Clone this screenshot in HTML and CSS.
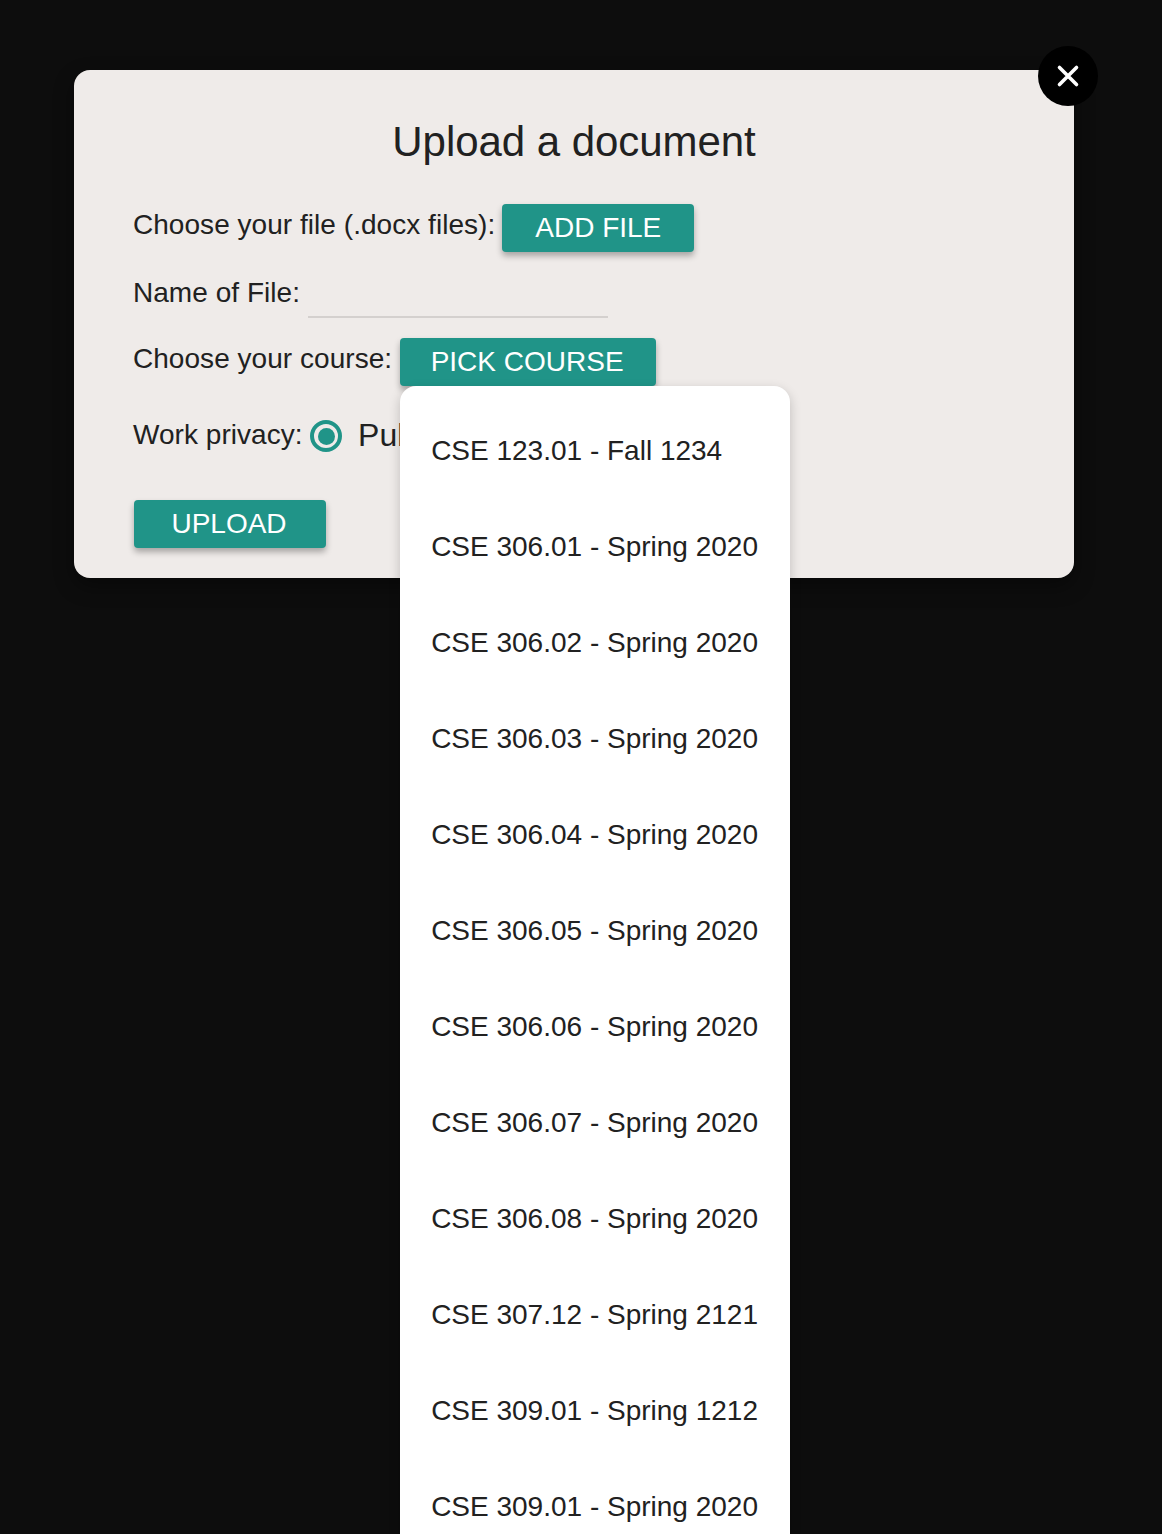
FILE: index.html
```html
<!DOCTYPE html>
<html lang="en">
<head>
<meta charset="utf-8">
<title>Upload a document</title>
<link rel="stylesheet" href="styles.css">
</head>
<body>
<div class="overlay">
  <section class="modal">
    <button class="close" aria-label="Close">
      <svg width="24" height="24" viewBox="0 0 24 24"><path d="M3.5 3.5 L20.5 20.5 M20.5 3.5 L3.5 20.5" fill="none" stroke="#fff" stroke-width="3.6" stroke-linecap="round"/></svg>
    </button>
    <h1 class="title">Upload a document</h1>
    <div class="row row-file">
      <span class="label">Choose your file (.docx files):</span>
      <button class="btn btn-file">ADD FILE</button>
    </div>
    <div class="row row-name">
      <span class="label">Name of File:</span>
      <span class="input"></span>
    </div>
    <div class="row row-course">
      <span class="label">Choose your course:</span>
      <div class="picker">
        <button class="btn btn-course">PICK COURSE</button>
        <ul class="menu">
          <li>CSE 123.01 - Fall 1234</li>
          <li>CSE 306.01 - Spring 2020</li>
          <li>CSE 306.02 - Spring 2020</li>
          <li>CSE 306.03 - Spring 2020</li>
          <li>CSE 306.04 - Spring 2020</li>
          <li>CSE 306.05 - Spring 2020</li>
          <li>CSE 306.06 - Spring 2020</li>
          <li>CSE 306.07 - Spring 2020</li>
          <li>CSE 306.08 - Spring 2020</li>
          <li>CSE 307.12 - Spring 2121</li>
          <li>CSE 309.01 - Spring 1212</li>
          <li>CSE 309.01 - Spring 2020</li>
        </ul>
      </div>
    </div>
    <div class="row row-privacy">
      <span class="label">Work privacy:</span>
      <span class="radio"></span>
      <span class="option">Public</span>
    </div>
    <button class="btn btn-upload">UPLOAD</button>
  </section>
</div>
</body>
</html>
```
FILE: styles.css
```css
* { box-sizing: border-box; }
html, body { margin: 0; height: 100%; }
body { font-family: "Liberation Sans", Arial, sans-serif; color: #212121; background: #0d0d0d; }
.overlay { height: 1534px; overflow: hidden; padding: 70px 88px 0 74px; }
.modal { position: relative; width: 1000px; height: 508px; background: #efebe9; border-radius: 16px; padding: 46px 60px 0; box-shadow: 0 8px 20px rgba(0,0,0,.4); }
.close { position: absolute; top: -24px; right: -24px; width: 60px; height: 60px; padding: 0; border: 0; border-radius: 50%; background: #000; display: flex; align-items: center; justify-content: center; }
.title { margin: 0; font-size: 42px; line-height: 52px; font-weight: 400; text-align: center; letter-spacing: -0.05px; }
.row { display: flex; align-items: flex-start; }
.label { margin-left: -1px; font-size: 28px; line-height: 32px; letter-spacing: 0.04px; }
.row-file { margin-top: 36px; gap: 7px; height: 48px; }
.row-file .label { margin-top: 5px; }
.row-name { margin-top: 20px; height: 46px; gap: 7.5px; }
.row-name .label { margin-top: 5px; }
.input { width: 300px; height: 46px; border-bottom: 2px solid #d4d0ce; }
.row-course { margin-top: 20px; height: 48px; gap: 8px; }
.row-course .label { margin-top: 5px; }
.row-privacy { margin-top: 29px; height: 40px; align-items: center; }
.radio { display: flex; align-items: center; justify-content: center; width: 32px; height: 32px; margin: 2px 0 0 7.5px; border: 4px solid #209488; border-radius: 50%; }
.radio::before { content: ""; width: 17px; height: 17px; border-radius: 50%; background: #209488; }
.option { margin-left: 16px; font-size: 32px; line-height: 40px; }
.btn { display: block; height: 48px; padding: 0; border: 0; border-radius: 4px; background: #209488; color: #fff; font: 400 28px/48px "Liberation Sans", Arial, sans-serif; box-shadow: 0 4px 6px rgba(0,0,0,.3); }
.btn-file { width: 192px; }
.btn-course { width: 256px; padding-right: 2px; }
.btn-upload { width: 192px; margin-top: 45px; padding-right: 2px; }
.picker { position: relative; }
.menu { position: absolute; z-index: 2; top: 48px; left: 0; width: 390px; margin: 0; padding: 16px 0; list-style: none; background: #fff; border-radius: 16px; box-shadow: 0 4px 12px rgba(0,0,0,.2); }
.menu li { height: 96px; padding: 1px 0 0 31px; font-size: 28px; line-height: 96px; white-space: nowrap; }
```
